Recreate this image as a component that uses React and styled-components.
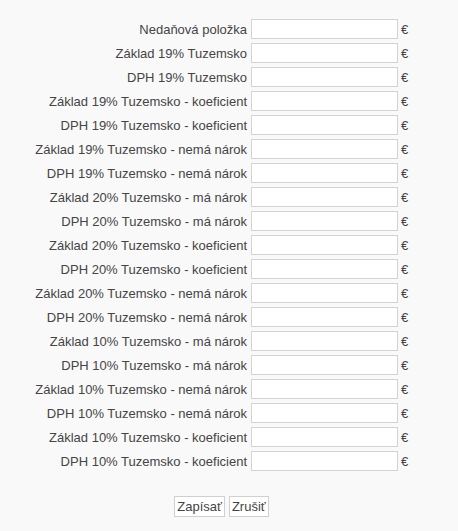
import React from "react";
import styled, { createGlobalStyle } from "styled-components";

const rows = [
  "Nedaňová položka",
  "Základ 19% Tuzemsko",
  "DPH 19% Tuzemsko",
  "Základ 19% Tuzemsko - koeficient",
  "DPH 19% Tuzemsko - koeficient",
  "Základ 19% Tuzemsko - nemá nárok",
  "DPH 19% Tuzemsko - nemá nárok",
  "Základ 20% Tuzemsko - má nárok",
  "DPH 20% Tuzemsko - má nárok",
  "Základ 20% Tuzemsko - koeficient",
  "DPH 20% Tuzemsko - koeficient",
  "Základ 20% Tuzemsko - nemá nárok",
  "DPH 20% Tuzemsko - nemá nárok",
  "Základ 10% Tuzemsko - má nárok",
  "DPH 10% Tuzemsko - má nárok",
  "Základ 10% Tuzemsko - nemá nárok",
  "DPH 10% Tuzemsko - nemá nárok",
  "Základ 10% Tuzemsko - koeficient",
  "DPH 10% Tuzemsko - koeficient",
];

const GlobalStyle = createGlobalStyle`
  html, body {
    margin: 0;
    padding: 0;
    background: #f9f9f9;
    font-family: "Liberation Sans", Arial, sans-serif;
    font-size: 13px;
    color: #444;
  }
`;

const App = () => {
  return (
    <Page>
      <GlobalStyle />
      <Form>
        {rows.map((label) => (
          <React.Fragment key={label}>
            <Label>{label}</Label>
            <Input type="text" />
            <Unit>€</Unit>
          </React.Fragment>
        ))}
      </Form>
      <Buttons>
        <Button type="button">Zapísať</Button>
        <Button type="button">Zrušiť</Button>
      </Buttons>
    </Page>
  );
};

const Page = styled.div`
  width: 458px;
  height: 531px;
  padding-top: 19px;
  box-sizing: border-box;
`;

const Form = styled.div`
  display: grid;
  grid-template-columns: 247px 147px auto;
  grid-auto-rows: 20px;
  column-gap: 4px;
  row-gap: 4px;
`;

const Label = styled.label`
  display: flex;
  align-items: center;
  justify-content: flex-end;
  white-space: nowrap;
`;

const Input = styled.input`
  box-sizing: border-box;
  width: 147px;
  height: 20px;
  margin: 0;
  padding: 1px 3px;
  border: 1px solid #d3d3d3;
  background: #fff;
  font: inherit;
  color: #444;
  outline: none;
`;

const Unit = styled.span`
  display: flex;
  align-items: center;
  margin-left: -1px;
`;

const Buttons = styled.div`
  display: flex;
  justify-content: center;
  gap: 4px;
  width: 443px;
  margin-top: 25px;
`;

const Button = styled.button`
  box-sizing: border-box;
  height: 21px;
  margin: 0;
  padding: 0 2px;
  border: 1px solid #d0d0d0;
  background: #fff;
  font-family: "Liberation Sans", Arial, sans-serif;
  font-size: 13px;
  color: #444;
  cursor: pointer;
`;

export default App;
